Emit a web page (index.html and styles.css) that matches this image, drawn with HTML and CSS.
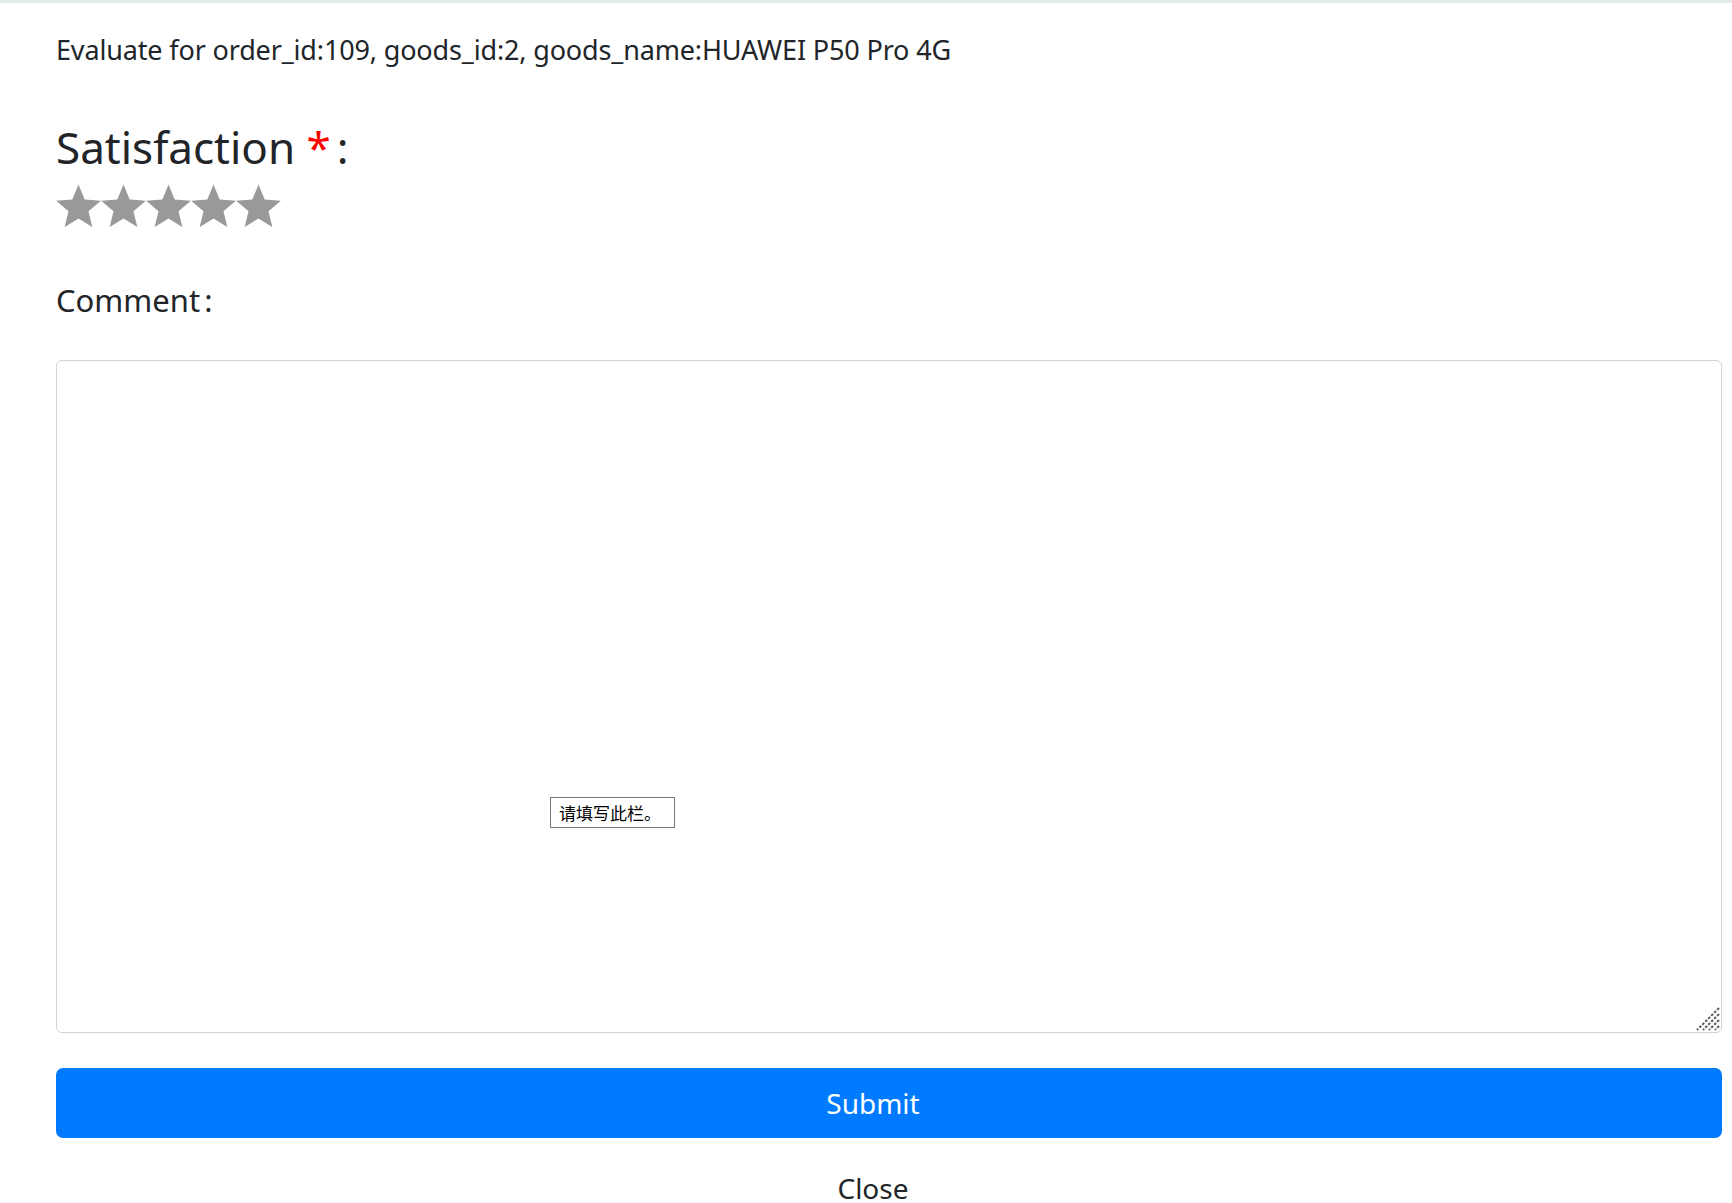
FILE: index.html
```html
<!DOCTYPE html>
<html lang="en">
<head>
<meta charset="utf-8">
<title>Evaluate</title>
<link rel="stylesheet" href="styles.css">
</head>
<body>
<div class="top-line"></div>
<div class="page">
  <h5 class="title">Evaluate for order_id:109, goods_id:2, goods_name:HUAWEI P50 Pro 4G</h5>
  <h2 class="sat-label">Satisfaction <span class="req">*</span><span class="colon">:</span></h2>
  <div class="stars">
    <svg class="star" viewBox="0 0 45 44" width="45" height="44"><polygon points="22.5,0.5 28.67,15.51 44.85,16.74 32.49,27.24 36.31,43.01 22.5,34.5 8.69,43.01 12.51,27.24 0.15,16.74 16.33,15.51"/></svg>
    <svg class="star" viewBox="0 0 45 44" width="45" height="44"><polygon points="22.5,0.5 28.67,15.51 44.85,16.74 32.49,27.24 36.31,43.01 22.5,34.5 8.69,43.01 12.51,27.24 0.15,16.74 16.33,15.51"/></svg>
    <svg class="star" viewBox="0 0 45 44" width="45" height="44"><polygon points="22.5,0.5 28.67,15.51 44.85,16.74 32.49,27.24 36.31,43.01 22.5,34.5 8.69,43.01 12.51,27.24 0.15,16.74 16.33,15.51"/></svg>
    <svg class="star" viewBox="0 0 45 44" width="45" height="44"><polygon points="22.5,0.5 28.67,15.51 44.85,16.74 32.49,27.24 36.31,43.01 22.5,34.5 8.69,43.01 12.51,27.24 0.15,16.74 16.33,15.51"/></svg>
    <svg class="star" viewBox="0 0 45 44" width="45" height="44"><polygon points="22.5,0.5 28.67,15.51 44.85,16.74 32.49,27.24 36.31,43.01 22.5,34.5 8.69,43.01 12.51,27.24 0.15,16.74 16.33,15.51"/></svg>
  </div>
  <label class="comment-label" for="comment">Comment<span class="colon2">:</span></label>
  <div class="area-wrap">
    <textarea id="comment" class="comment"></textarea>
    <svg class="grip" viewBox="0 0 26 26" width="26" height="26">
      <g stroke="#5a5a5a" stroke-width="2" stroke-dasharray="2.6 1.6">
        <line x1="24" y1="2" x2="2" y2="24"/>
        <line x1="24" y1="8" x2="8" y2="24"/>
        <line x1="24" y1="14" x2="14" y2="24"/>
        <line x1="24" y1="20" x2="20" y2="24"/>
      </g>
    </svg>
    <div class="tip">请填写此栏。</div>
  </div>
  <button class="submit" type="button">Submit</button>
  <div class="close">Close</div>
</div>
</body>
</html>
```
FILE: styles.css
```css
html, body {
  margin: 0;
  padding: 0;
  background: #fff;
}
body {
  font-family: "Segoe UI", "Noto Sans", "Open Sans", sans-serif;
  color: #212529;
  overflow: hidden;
}
.top-line {
  height: 3px;
  background: #e4ebe8;
}
.page {
  padding: 0 10px 0 56px;
  display: flex;
  flex-direction: column;
}
.title {
  margin: 27px 0 0 0;
  font-size: 27px;
  font-weight: 400;
  line-height: 40px;
  letter-spacing: -0.15px;
}
.sat-label {
  margin: 49px 0 0 0;
  font-size: 44px;
  font-weight: 400;
  line-height: 56px;
}
.req {
  color: #ff0000;
}
.colon {
  margin-left: 6px;
}
.stars {
  display: flex;
  margin-top: 9px;
  height: 46px;
}
.star {
  fill: #999;
  display: block;
}
.comment-label {
  margin-top: 47px;
  font-size: 31px;
  line-height: 46px;
}
.colon2 {
  margin-left: 4px;
}
.area-wrap {
  position: relative;
  margin-top: 37px;
}
.comment {
  display: block;
  box-sizing: border-box;
  width: 100%;
  height: 673px;
  border: 1px solid #ced4da;
  border-radius: 6px;
  resize: none;
  font: inherit;
  outline: none;
  margin: 0;
}
.grip {
  position: absolute;
  right: 1px;
  bottom: 1px;
  display: block;
}
.tip {
  position: absolute;
  left: 494px;
  top: 437px;
  box-sizing: border-box;
  width: 125px;
  height: 31px;
  border: 1px solid #767676;
  background: #fff;
  color: #000;
  font-family: "Noto Sans CJK SC", sans-serif;
  font-size: 17px;
  line-height: 29px;
  padding-left: 8px;
}
.submit {
  margin-top: 35px;
  height: 70px;
  width: 100%;
  border: none;
  border-radius: 7px;
  background: #007bff;
  color: #fff;
  font-family: inherit;
  font-size: 28px;
  line-height: 40px;
  padding: 0 32px 0 0;
}
.close {
  margin-top: 30px;
  padding-right: 32px;
  text-align: center;
  font-size: 28px;
  line-height: 40px;
}
```
